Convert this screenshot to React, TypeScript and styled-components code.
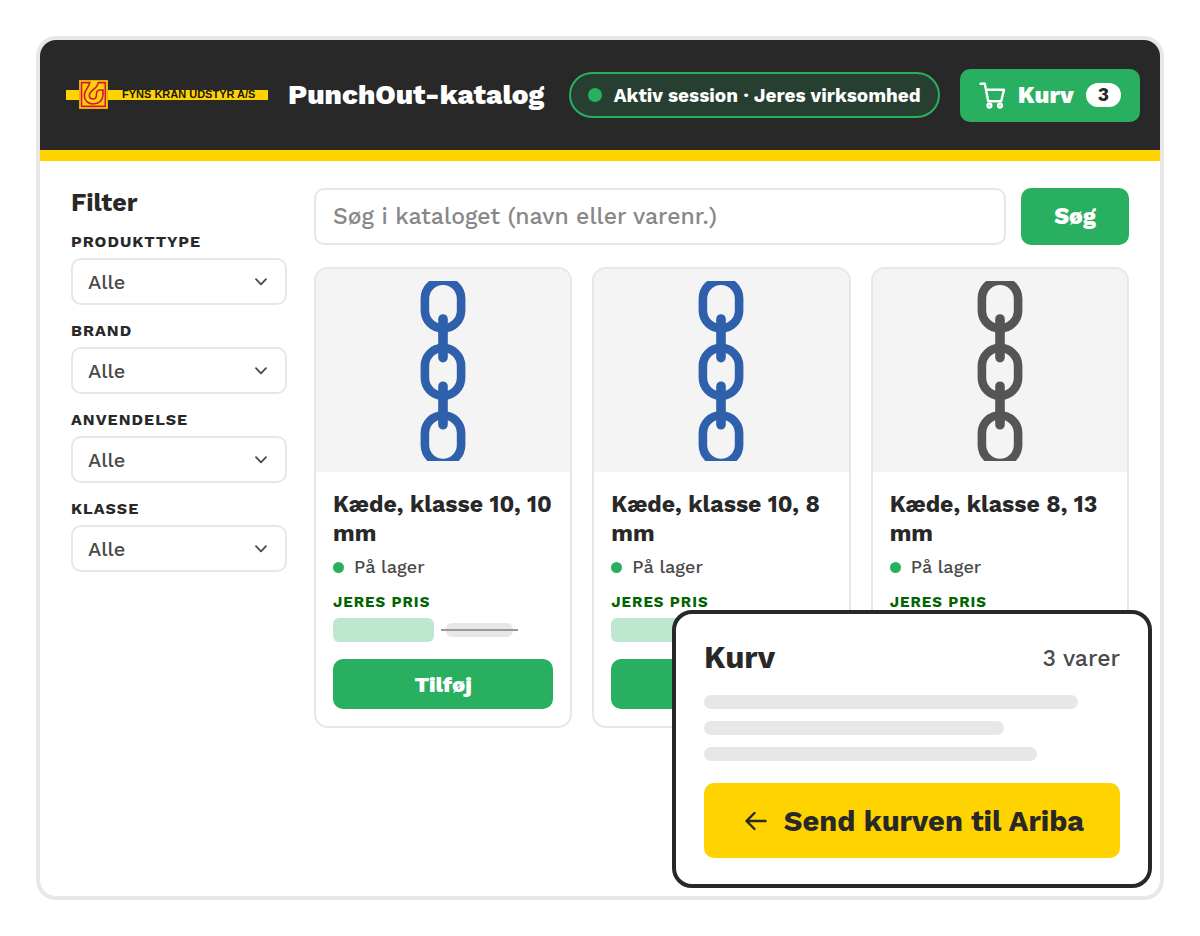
import React from "react";
import styled, { createGlobalStyle } from "styled-components";

const color = {
  dark: "#282828",
  green: "#29af60",
  yellow: "#ffd300",
  line: "#e7e7e7",
  mute: "#4a4a4a",
  surface: "#f4f4f4",
  price: "#006400",
};

const GlobalStyle = createGlobalStyle`
  *, *::before, *::after { box-sizing: border-box; }
  body {
    margin: 0;
    background: #fff;
    color: ${color.dark};
    font-family: "Work Sans", Inter, "Liberation Sans", sans-serif;
  }
  button, input, select { font: inherit; }
  h1, h2, h3, p { margin: 0; }
`;

const Page = styled.div`
  min-height: 100vh;
  padding: 36px;
  display: flex;
`;

const Frame = styled.div`
  position: relative;
  flex: 1;
  min-width: 0;
  border: 4px solid ${color.line};
  border-radius: 20px;
  overflow: hidden;
`;

const Header = styled.header`
  display: flex;
  align-items: center;
  gap: 20px;
  height: 121px;
  padding: 0 20px 0 26px;
  background: ${color.dark};
  border-bottom: 11px solid ${color.yellow};
  color: #fff;
`;

const LogoSvg = styled.svg`
  flex: none;
  display: block;
`;

const SiteTitle = styled.h1`
  flex: 1;
  font-size: 28px;
  line-height: 36px;
  font-weight: 800;
  white-space: nowrap;
`;

const Session = styled.div`
  display: flex;
  align-items: center;
  gap: 12px;
  height: 46px;
  padding: 0 17px;
  border: 2px solid ${color.green};
  border-radius: 23px;
  background: rgba(39, 174, 96, 0.18);
  font-size: 19px;
  font-weight: 700;
  white-space: nowrap;
`;

const Dot = styled.span<{ $size: number }>`
  flex: none;
  width: ${(p) => p.$size}px;
  height: ${(p) => p.$size}px;
  border-radius: 50%;
  background: ${color.green};
`;

const Button = styled.button`
  display: flex;
  align-items: center;
  justify-content: center;
  border: 0;
  border-radius: 10px;
  background: ${color.green};
  color: #fff;
  font-size: 22px;
  font-weight: 800;
  white-space: nowrap;
  cursor: pointer;
`;

const CartButton = styled(Button)`
  gap: 12px;
  height: 53px;
  padding: 0 19px;
  font-size: 24px;
`;

const Count = styled.span`
  padding: 0 12px;
  border-radius: 12px;
  background: #fff;
  color: ${color.dark};
  font-size: 19px;
  font-weight: 700;
  line-height: 24px;
`;

const Body = styled.div`
  display: grid;
  grid-template-columns: 216px minmax(0, 1fr);
  gap: 27px;
  padding: 27px 31px;
`;

const Filters = styled.aside`
  display: flex;
  flex-direction: column;
  gap: 16px;
`;

const FilterTitle = styled.h2`
  margin-bottom: -2px;
  font-size: 25px;
  line-height: 30px;
  font-weight: 700;
`;

const Field = styled.div`
  position: relative;
  display: flex;
  flex-direction: column;
  gap: 6px;
`;

const FieldLabel = styled.label`
  font-size: 16px;
  line-height: 20px;
  font-weight: 700;
  letter-spacing: 1px;
  text-transform: uppercase;
`;

const SelectBox = styled.select`
  appearance: none;
  height: 47px;
  padding: 0 15px;
  border: 2px solid ${color.line};
  border-radius: 10px;
  background: #fff;
  color: ${color.mute};
  font-size: 20px;
  font-weight: 500;
`;

const Chevron = styled.svg`
  position: absolute;
  right: 20px;
  bottom: 17px;
  pointer-events: none;
`;

const Catalog = styled.main`
  display: flex;
  flex-direction: column;
  gap: 22px;
`;

const SearchRow = styled.form`
  display: flex;
  gap: 15px;
`;

const SearchInput = styled.input`
  flex: 1;
  min-width: 0;
  height: 57px;
  padding: 0 17px;
  border: 2px solid ${color.line};
  border-radius: 10px;
  color: ${color.dark};
  font-size: 23px;
  font-weight: 500;
  &::placeholder { color: #888; opacity: 1; }
`;

const SearchButton = styled(Button)`
  width: 108px;
  font-size: 23px;
`;

const Cards = styled.div`
  display: grid;
  grid-template-columns: repeat(3, minmax(0, 1fr));
  gap: 20px;
`;

const Card = styled.article`
  border: 2px solid ${color.line};
  border-radius: 14px;
  overflow: hidden;
`;

const Picture = styled.div`
  display: flex;
  justify-content: center;
  padding: 12px 12px 11px;
  background: ${color.surface};
`;

const CardBody = styled.div`
  display: flex;
  flex-direction: column;
  padding: 18px 17px 17px;
`;

const ProductName = styled.h3`
  font-size: 23px;
  line-height: 29px;
  font-weight: 700;
`;

const Stock = styled.p`
  display: flex;
  align-items: center;
  gap: 10px;
  margin-top: 6px;
  font-size: 18px;
  line-height: 26px;
  font-weight: 500;
  color: ${color.mute};
`;

const PriceLabel = styled.p`
  margin-top: 12px;
  font-size: 15px;
  line-height: 20px;
  font-weight: 700;
  letter-spacing: 1px;
  text-transform: uppercase;
  color: ${color.price};
`;

const PriceRow = styled.div`
  display: flex;
  align-items: center;
  gap: 12px;
  margin: 6px 0 17px;
`;

const PriceBar = styled.span`
  width: 101px;
  height: 24px;
  border-radius: 6px;
  background: rgba(39, 174, 96, 0.3);
`;

const OldPriceBar = styled.span`
  position: relative;
  width: 67px;
  height: 14px;
  border-radius: 6px;
  background: ${color.line};
  &::after {
    content: "";
    position: absolute;
    inset: 6px -5px auto;
    height: 2px;
    background: #999;
  }
`;

const AddButton = styled(Button)`
  height: 50px;
`;

const CartPanel = styled.section`
  position: absolute;
  right: 8px;
  bottom: 8px;
  width: 480px;
  padding: 24px 28px 26px;
  border: 4px solid ${color.dark};
  border-radius: 20px;
  background: #fff;
`;

const CartHead = styled.div`
  display: flex;
  align-items: center;
  justify-content: space-between;
  height: 40px;
`;

const CartTitle = styled.h2`
  font-size: 31px;
  line-height: 40px;
  font-weight: 700;
`;

const CartCount = styled.span`
  font-size: 23px;
  font-weight: 500;
  color: ${color.mute};
`;

const Lines = styled.div`
  display: flex;
  flex-direction: column;
  gap: 12px;
  margin: 17px 0 22px;
`;

const Line = styled.span<{ $width: number }>`
  width: ${(p) => p.$width}%;
  height: 14px;
  border-radius: 7px;
  background: ${color.line};
`;

const SendButton = styled(Button)`
  gap: 16px;
  width: 100%;
  height: 75px;
  background: ${color.yellow};
  color: ${color.dark};
  font-size: 29px;
  font-weight: 700;
`;

const Logo = () => (
  <LogoSvg width="202" height="30" viewBox="0 0 202 30" role="img" aria-label="Fyns Kran Udstyr A/S">
    <rect x="0" y="10" width="202" height="10" fill={color.yellow} />
    <rect x="13" y="0" width="29" height="29" fill="#e2ad10" />
    <rect x="14" y="1" width="27" height="27" fill={color.yellow} />
    <g fill="none" stroke="#d3103f" strokeWidth="1.6">
      <path d="M24 2.6H15.5V26.4H39.3V2.6H32.3" />
      <path d="M24 1.9C23.5 7 18.3 10 18.3 15.5C18.3 20.5 22 24 27.3 24C33 24 37 20 37 15V10H34.5C32 10 30.5 11.8 30.5 14C30.5 17.5 29.5 19 27.3 19C25 19 23.3 17.5 23.3 15.3C23.3 10.5 32.3 8.5 32.3 1.9" />
    </g>
    <text x="56" y="18" fontFamily="Liberation Sans, sans-serif" fontWeight="700" fontSize="11" fill="#161616">
      FYNS KRAN UDSTYR A/S
    </text>
  </LogoSvg>
);

const CartIcon = () => (
  <svg width="27" height="27" viewBox="0 0 27 27" fill="none" stroke="#fff" strokeWidth="2.4" strokeLinecap="round" strokeLinejoin="round" aria-hidden="true">
    <path d="M1.6 1.8H5.8L9.2 19.2H22.2L25 7.8H7" />
    <circle cx="10.4" cy="23.6" r="1.9" />
    <circle cx="21" cy="23.6" r="1.9" />
  </svg>
);

const ArrowIcon = () => (
  <svg width="28" height="22" viewBox="0 0 28 22" fill="none" stroke="currentColor" strokeWidth="2.4" strokeLinecap="round" strokeLinejoin="round" aria-hidden="true">
    <path d="M25.5 11H6.5M14.5 3L6.5 11L14.5 19" />
  </svg>
);

const Chain = ({ stroke }: { stroke: string }) => (
  <svg width="46" height="180" viewBox="0 0 46 180" fill="none" stroke={stroke} role="img" aria-label="Kæde">
    {[-0.4, 66.9, 134.2].map((y) => (
      <rect key={y} x="4.9" y={y} width="36.2" height="47.8" rx="18" strokeWidth="8.6" />
    ))}
    <path d="M23 38V76.6M23 105.2V143.8" strokeWidth="9.6" strokeLinecap="round" />
  </svg>
);

const filters = ["Produkttype", "Brand", "Anvendelse", "Klasse"];

const products = [
  { name: "Kæde, klasse 10, 10 mm", stroke: "#2f60ab" },
  { name: "Kæde, klasse 10, 8 mm", stroke: "#2f60ab" },
  { name: "Kæde, klasse 8, 13 mm", stroke: "#555" },
];

export default function App() {
  return (
    <Page>
      <GlobalStyle />
      <Frame>
        <Header>
          <Logo />
          <SiteTitle>PunchOut-katalog</SiteTitle>
          <Session>
            <Dot $size={14} />
            Aktiv session · Jeres virksomhed
          </Session>
          <CartButton type="button">
            <CartIcon />
            Kurv
            <Count>3</Count>
          </CartButton>
        </Header>
        <Body>
          <Filters>
            <FilterTitle>Filter</FilterTitle>
            {filters.map((name) => (
              <Field key={name}>
                <FieldLabel htmlFor={name}>{name}</FieldLabel>
                <SelectBox id={name}>
                  <option>Alle</option>
                </SelectBox>
                <Chevron width="12" height="12" viewBox="0 0 12 12" fill="none" stroke={color.mute} strokeWidth="1.8" strokeLinecap="round" strokeLinejoin="round" aria-hidden="true">
                  <path d="M1 3.2L6 8.4L11 3.2" />
                </Chevron>
              </Field>
            ))}
          </Filters>
          <Catalog>
            <SearchRow onSubmit={(e) => e.preventDefault()}>
              <SearchInput type="search" aria-label="Søg i kataloget" placeholder="Søg i kataloget (navn eller varenr.)" />
              <SearchButton type="submit">Søg</SearchButton>
            </SearchRow>
            <Cards>
              {products.map((p) => (
                <Card key={p.name}>
                  <Picture>
                    <Chain stroke={p.stroke} />
                  </Picture>
                  <CardBody>
                    <ProductName>{p.name}</ProductName>
                    <Stock>
                      <Dot $size={11} />
                      På lager
                    </Stock>
                    <PriceLabel>Jeres pris</PriceLabel>
                    <PriceRow>
                      <PriceBar />
                      <OldPriceBar />
                    </PriceRow>
                    <AddButton type="button">Tilføj</AddButton>
                  </CardBody>
                </Card>
              ))}
            </Cards>
          </Catalog>
        </Body>
        <CartPanel aria-label="Kurv">
          <CartHead>
            <CartTitle>Kurv</CartTitle>
            <CartCount>3 varer</CartCount>
          </CartHead>
          <Lines>
            <Line $width={90} />
            <Line $width={72} />
            <Line $width={80} />
          </Lines>
          <SendButton type="button">
            <ArrowIcon />
            Send kurven til Ariba
          </SendButton>
        </CartPanel>
      </Frame>
    </Page>
  );
}
